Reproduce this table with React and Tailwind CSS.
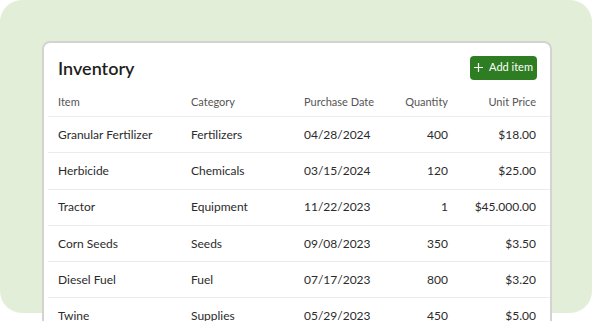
import React from "react";

const rows = [
  ["Granular Fertilizer", "Fertilizers", "04/28/2024", "400", "$18.00"],
  ["Herbicide", "Chemicals", "03/15/2024", "120", "$25.00"],
  ["Tractor", "Equipment", "11/22/2023", "1", "$45.000.00"],
  ["Corn Seeds", "Seeds", "09/08/2023", "350", "$3.50"],
  ["Diesel Fuel", "Fuel", "07/17/2023", "800", "$3.20"],
  ["Twine", "Supplies", "05/29/2023", "450", "$5.00"],
];

const cols = "grid grid-cols-[133px_113px_72px_72px_88px]";

export default function App() {
  return (
    <div
      className="w-[592px] h-[321px] overflow-hidden bg-white"
      style={{ fontFamily: "Lato, 'Open Sans', sans-serif" }}
    >
      <div className="h-[313px] rounded-[22px] bg-[#e3eed9] pt-[41px] px-[42px]">
        <div className="w-[510px] h-[320px] rounded-[8px] border-2 border-[#d3d3d3] bg-white">
          <div className="flex items-center justify-between pl-[14px] pr-[13px] pt-[3px] h-[46px]">
            <h1 className="text-[18px] font-semibold text-[#1f1f1f] leading-none">Inventory</h1>
            <button className="flex items-center justify-center gap-[6px] h-[24px] w-[67px] rounded-[4px] bg-[#2e7d22] text-white text-[11px] whitespace-nowrap">
              <svg width="9" height="9" viewBox="0 0 9 9" fill="none" stroke="white" strokeWidth="1.2">
                <path d="M4.5 0V9M0 4.5H9" />
              </svg>
              Add item
            </button>
          </div>
          <div className="pl-[4px]">
            <div className={`${cols} pl-[10px] h-[28px] items-center border-b border-[#ececec] text-[11px] text-[#555]`}>
              <div>Item</div>
              <div>Category</div>
              <div>Purchase Date</div>
              <div className="text-right">Quantity</div>
              <div className="text-right">Unit Price</div>
            </div>
            {rows.map((r, i) => (
              <div
                key={i}
                className={`${cols} pl-[10px] h-[36.3px] items-center border-b border-[#ececec] text-[12px] text-[#2b2b2b]`}
              >
                <div>{r[0]}</div>
                <div>{r[1]}</div>
                <div>{r[2]}</div>
                <div className="text-right">{r[3]}</div>
                <div className="text-right">{r[4]}</div>
              </div>
            ))}
          </div>
        </div>
      </div>
    </div>
  );
}
